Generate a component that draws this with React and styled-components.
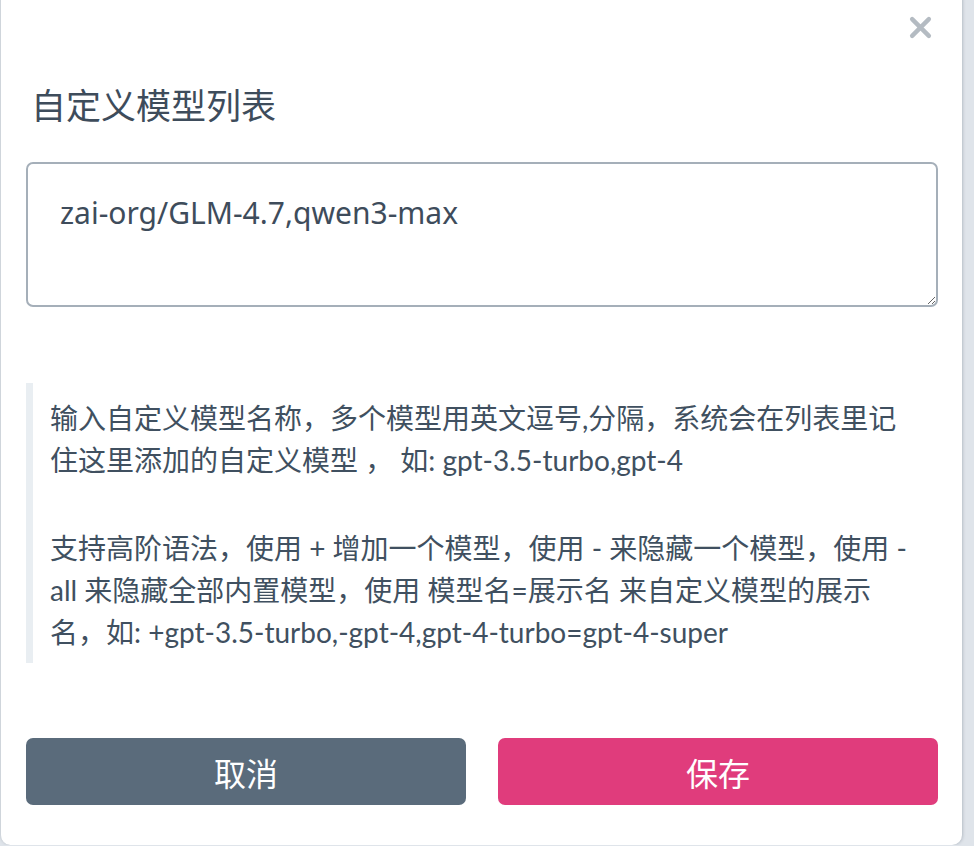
import React from 'react';
import styled, { createGlobalStyle } from 'styled-components';

const GlobalStyle = createGlobalStyle`
  html, body {
    margin: 0;
    padding: 0;
    background: #dfe4ea;
  }
  body {
    font-family: Lato, "Noto Sans CJK SC", sans-serif;
    overflow: hidden;
  }
`;

const Modal = styled.div`
  width: 962px;
  height: 855px;
  margin-top: -10px;
  box-sizing: border-box;
  background: #fff;
  border-radius: 10px;
  border-left: 1px solid #cfd5db;
  box-shadow: 1px 0 3px rgba(60, 75, 90, 0.25);
  padding: 10px 24px 40px 25px;
  display: flex;
  flex-direction: column;
`;

const Header = styled.div`
  height: 56px;
  display: flex;
  align-items: center;
  justify-content: flex-end;
  padding-right: 3px;
`;

const CloseButton = styled.button`
  width: 30px;
  height: 30px;
  padding: 0;
  border: none;
  background: transparent;
  display: flex;
  align-items: center;
  justify-content: center;
  cursor: pointer;
`;

const Title = styled.h2`
  margin: 24px 0 0 5px;
  font-size: 35px;
  line-height: 50px;
  font-weight: 400;
  color: #3e4c5b;
`;

const ModelInput = styled.textarea`
  display: block;
  box-sizing: border-box;
  width: 100%;
  height: 146px;
  margin-top: 32px;
  padding: 28px 32px;
  border: 2px solid #a5afb9;
  border-radius: 7px;
  font-family: "Noto Sans", "Noto Sans CJK SC", sans-serif;
  font-size: 30px;
  line-height: 42px;
  color: #3e4c5b;
  resize: vertical;
  outline: none;
`;

const Hint = styled.blockquote`
  margin: 76px 0 0 0;
  padding: 14px 0 10px 17px;
  border-left: 7px solid #e9eef2;
  width: 860px;
  color: #405060;
  font-size: 28px;
  line-height: 42px;

  p {
    margin: 0 0 46px;
  }
  p:last-child {
    margin-bottom: 0;
  }
`;

const Actions = styled.div`
  margin-top: 75px;
  display: grid;
  grid-template-columns: 1fr 1fr;
  gap: 32px;
`;

const ActionButton = styled.button`
  height: 67px;
  border: none;
  border-radius: 7px;
  background: ${(p) => (p.$primary ? '#e03c7c' : '#5a6b7b')};
  color: #fff;
  font-family: inherit;
  font-size: 32px;
  cursor: pointer;
`;

const CloseIcon = () => (
  <svg width="23" height="23" viewBox="0 0 22 22">
    <path d="M3 3 L19 19 M19 3 L3 19" stroke="#b4bbc2" strokeWidth="4.2" strokeLinecap="round" />
  </svg>
);

export default function App() {
  return (
    <>
      <GlobalStyle />
      <Modal>
        <Header>
          <CloseButton aria-label="close">
            <CloseIcon />
          </CloseButton>
        </Header>
        <Title>自定义模型列表</Title>
        <ModelInput defaultValue="zai-org/GLM-4.7,qwen3-max" />
        <Hint>
          <p>输入自定义模型名称，多个模型用英文逗号,分隔，系统会在列表里记住这里添加的自定义模型 ， 如: gpt-3.5-turbo,gpt-4</p>
          <p>支持高阶语法，使用 + 增加一个模型，使用 - 来隐藏一个模型，使用 -all 来隐藏全部内置模型，使用 模型名=展示名 来自定义模型的展示名，如: +gpt-3.5-turbo,-gpt-4,gpt-4-turbo=gpt-4-super</p>
        </Hint>
        <Actions>
          <ActionButton>取消</ActionButton>
          <ActionButton $primary>保存</ActionButton>
        </Actions>
      </Modal>
    </>
  );
}
